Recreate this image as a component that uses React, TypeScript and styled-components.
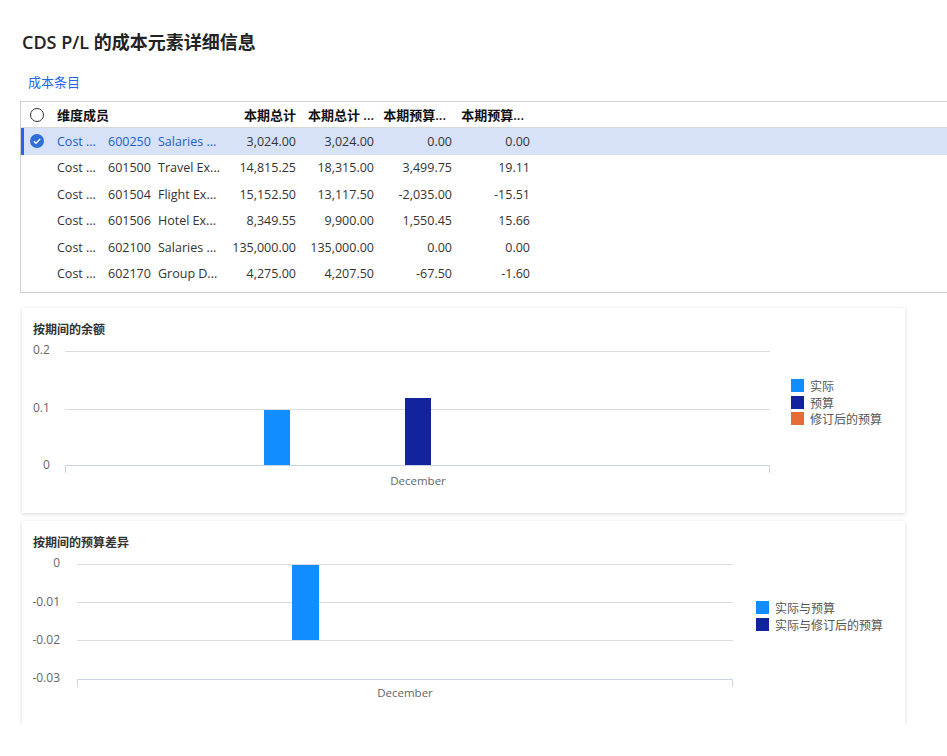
import React from "react";
import styled, { createGlobalStyle } from "styled-components";

const GlobalStyle = createGlobalStyle`
  body {
    margin: 0;
    background: #fff;
    font-family: "Segoe UI", "Open Sans", "Noto Sans CJK SC", sans-serif;
    color: #323130;
  }
`;

const Page = styled.main`
  display: flex;
  flex-direction: column;
  padding: 30px 0 0 20px;
  overflow: hidden;
`;

const Title = styled.h1`
  margin: 0;
  font: 600 18px/24px "Segoe UI", "Open Sans", "Noto Sans CJK SC", sans-serif;
  color: #222;
  padding-left: 2px;
`;

const LinkTab = styled.a`
  margin: 18px 0 0 8px;
  font: 400 13px/20px "Noto Sans CJK SC", sans-serif;
  color: #2266e3;
  text-decoration: none;
`;

const Table = styled.div`
  margin-top: 9px;
  border: 1px solid #d2d0ce;
  border-right: none;
  padding-bottom: 5px;
  width: 1000px;
`;

const cols = "35px 51px 50px 65px 78px 78px 78px 78px 1fr";

const HeaderRow = styled.div`
  display: grid;
  grid-template-columns: ${cols};
  height: 25px;
  align-items: center;
  border-bottom: 1px solid #d8d8d8;
  font: 600 13px "Segoe UI", "Open Sans", "Noto Sans CJK SC", sans-serif;
  color: #111;
`;

const HeaderCell = styled.div<{ $right?: boolean; $pad?: number; $span?: number }>`
  white-space: nowrap;
  overflow: hidden;
  text-align: ${(p) => (p.$right ? "right" : "left")};
  padding-right: ${(p) => p.$pad ?? 4}px;
  padding-left: 1px;
  grid-column: span ${(p) => p.$span ?? 1};
`;

const Row = styled.div<{ $selected?: boolean }>`
  display: grid;
  grid-template-columns: ${cols};
  height: 26.5px;
  align-items: center;
  position: relative;
  background: ${(p) => (p.$selected ? "#d7e2f9" : "transparent")};
  font: 400 12.5px "Segoe UI", "Open Sans", sans-serif;
  color: #333;
`;

const SelectBar = styled.span`
  position: absolute;
  left: 0;
  top: 0;
  bottom: 0;
  width: 3px;
  background: #2266e3;
`;

const Cell = styled.div<{ $right?: boolean; $link?: boolean }>`
  white-space: nowrap;
  overflow: hidden;
  text-align: ${(p) => (p.$right ? "right" : "left")};
  padding: ${(p) => (p.$right ? "0 4px 0 0" : "0 0 0 1px")};
  color: ${(p) => (p.$link ? "#2060c8" : "inherit")};
`;

const IconCell = styled.div`
  display: flex;
  justify-content: center;
  align-items: center;
  padding-right: 4px;
`;

const Card = styled.section<{ $h: number; $mt: number }>`
  width: 883px;
  height: ${(p) => p.$h}px;
  margin: ${(p) => p.$mt}px 0 0 2px;
  background: #fff;
  box-shadow: 0 1px 4px rgba(0, 0, 0, 0.16);
  display: flex;
  flex-direction: column;
`;

const CardTitle = styled.h2`
  margin: 0;
  padding: 13px 0 0 11px;
  font: 600 12px/16px "Noto Sans CJK SC", sans-serif;
  color: #333;
`;

const ChartBody = styled.div`
  display: flex;
  flex-direction: row;
`;

const Legend = styled.ul<{ $top: number }>`
  list-style: none;
  margin: ${(p) => p.$top}px 0 0 0;
  padding: 0;
  display: flex;
  flex-direction: column;
  gap: 3.5px;
`;

const LegendItem = styled.li`
  display: flex;
  align-items: center;
  gap: 6px;
  font: 400 12px/13px "Noto Sans CJK SC", sans-serif;
  color: #555;
`;

const Swatch = styled.span<{ $c: string }>`
  width: 13px;
  height: 13px;
  background: ${(p) => p.$c};
`;

const LIGHT = "#118dff";
const DARK = "#12239e";
const ORANGE = "#e66c37";

const rows = [
  ["600250", "Salaries ...", "3,024.00", "3,024.00", "0.00", "0.00"],
  ["601500", "Travel Ex...", "14,815.25", "18,315.00", "3,499.75", "19.11"],
  ["601504", "Flight Ex...", "15,152.50", "13,117.50", "-2,035.00", "-15.51"],
  ["601506", "Hotel Ex...", "8,349.55", "9,900.00", "1,550.45", "15.66"],
  ["602100", "Salaries ...", "135,000.00", "135,000.00", "0.00", "0.00"],
  ["602170", "Group D...", "4,275.00", "4,207.50", "-67.50", "-1.60"],
];

const axisText = { fontFamily: "Segoe UI, Open Sans, sans-serif", fontSize: 12, fill: "#666" };

function Radio() {
  return (
    <svg width="16" height="16" viewBox="0 0 16 16">
      <circle cx="8" cy="8" r="6.5" fill="none" stroke="#333" strokeWidth="1" />
    </svg>
  );
}

function Checked() {
  return (
    <svg width="16" height="16" viewBox="0 0 16 16">
      <circle cx="8" cy="8" r="7" fill="#2f6fd8" />
      <path d="M4.8 8.2 L7 10.3 L11.2 5.9" fill="none" stroke="#fff" strokeWidth="1.4" />
    </svg>
  );
}

function BalanceChart() {
  return (
    <svg width="769" height="162">
      <g style={axisText}>
        <text x="11" y="17">0.2</text>
        <text x="11" y="75">0.1</text>
        <text x="21" y="132">0</text>
      </g>
      <line x1="43" x2="748" y1="14.5" y2="14.5" stroke="#dcdcdc" />
      <line x1="43" x2="748" y1="72.5" y2="72.5" stroke="#dcdcdc" />
      <rect x="242" y="73" width="26" height="55" fill={LIGHT} />
      <rect x="383" y="61" width="26" height="67" fill={DARK} />
      <path d="M43.5 136 V128.5 H747.5 V136" fill="none" stroke="#c8d4e4" />
      <text x="396" y="148" textAnchor="middle" style={{ ...axisText, fontSize: 11.5 }}>
        December
      </text>
    </svg>
  );
}

function VarianceChart() {
  return (
    <svg width="734" height="160">
      <g style={axisText}>
        <text x="38" y="17" textAnchor="end">0</text>
        <text x="38" y="56" textAnchor="end">-0.01</text>
        <text x="38" y="94" textAnchor="end">-0.02</text>
        <text x="38" y="132" textAnchor="end">-0.03</text>
      </g>
      <line x1="55" x2="711" y1="14.5" y2="14.5" stroke="#dcdcdc" />
      <line x1="55" x2="711" y1="52.5" y2="52.5" stroke="#dcdcdc" />
      <line x1="55" x2="711" y1="90.5" y2="90.5" stroke="#dcdcdc" />
      <rect x="270" y="15" width="27" height="75" fill={LIGHT} />
      <path d="M55.5 137 V129.5 H710.5 V137" fill="none" stroke="#c8d4e4" />
      <text x="383" y="147" textAnchor="middle" style={{ ...axisText, fontSize: 11.5 }}>
        December
      </text>
    </svg>
  );
}

export default function App() {
  return (
    <>
      <GlobalStyle />
      <Page>
        <Title>CDS P/L 的成本元素详细信息</Title>
        <LinkTab href="#">成本条目</LinkTab>

        <Table>
          <HeaderRow>
            <IconCell>
              <Radio />
            </IconCell>
            <HeaderCell $span={3}>维度成员</HeaderCell>
            <HeaderCell $right>本期总计</HeaderCell>
            <HeaderCell $right $pad={4}>本期总计 ...</HeaderCell>
            <HeaderCell $right $pad={10}>本期预算...</HeaderCell>
            <HeaderCell $right $pad={10}>本期预算...</HeaderCell>
            <HeaderCell />
          </HeaderRow>
          {rows.map((r, i) => {
            const sel = i === 0;
            return (
              <Row key={r[0]} $selected={sel}>
                {sel && <SelectBar />}
                <IconCell>{sel && <Checked />}</IconCell>
                <Cell $link={sel}>Cost ...</Cell>
                <Cell $link={sel}>{r[0]}</Cell>
                <Cell $link={sel}>{r[1]}</Cell>
                <Cell $right>{r[2]}</Cell>
                <Cell $right>{r[3]}</Cell>
                <Cell $right>{r[4]}</Cell>
                <Cell $right>{r[5]}</Cell>
                <Cell />
              </Row>
            );
          })}
        </Table>

        <Card $h={205} $mt={15}>
          <CardTitle>按期间的余额</CardTitle>
          <ChartBody>
            <BalanceChart />
            <Legend $top={42}>
              <LegendItem>
                <Swatch $c={LIGHT} />实际
              </LegendItem>
              <LegendItem>
                <Swatch $c={DARK} />预算
              </LegendItem>
              <LegendItem>
                <Swatch $c={ORANGE} />修订后的预算
              </LegendItem>
            </Legend>
          </ChartBody>
        </Card>

        <Card $h={203} $mt={8}>
          <CardTitle>按期间的预算差异</CardTitle>
          <ChartBody>
            <VarianceChart />
            <Legend $top={51}>
              <LegendItem>
                <Swatch $c={LIGHT} />实际与预算
              </LegendItem>
              <LegendItem>
                <Swatch $c={DARK} />实际与修订后的预算
              </LegendItem>
            </Legend>
          </ChartBody>
        </Card>
      </Page>
    </>
  );
}
